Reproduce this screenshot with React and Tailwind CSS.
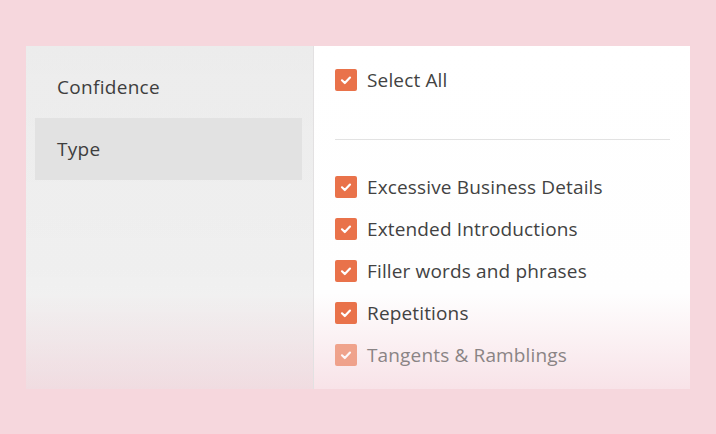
const items = [
  "Excessive Business Details",
  "Extended Introductions",
  "Filler words and phrases",
  "Repetitions",
  "Tangents & Ramblings",
];

function Check({ faded }) {
  return (
    <span
      className={`flex h-[22px] w-[22px] shrink-0 items-center justify-center rounded-[2px] bg-[#e9724a] ${
        faded ? "opacity-60" : ""
      }`}
    >
      <svg width="14" height="14" viewBox="0 0 14 14" fill="none">
        <path
          d="M3 7.3 L5.8 10 L11 4.6"
          stroke="white"
          strokeWidth="2.2"
          strokeLinecap="round"
          strokeLinejoin="round"
        />
      </svg>
    </span>
  );
}

function Row({ label, faded }) {
  return (
    <div className="flex h-[22px] items-center gap-[10px]">
      <Check faded={faded} />
      <span className={`text-[19px] tracking-[0.15px] ${faded ? "text-[#8a8485]" : "text-[#424242]"}`}>
        {label}
      </span>
    </div>
  );
}

export default function App() {
  return (
    <div
      className="flex h-[434px] w-[716px] bg-[#f6d7dd] pl-[26px] pt-[46px]"
      style={{ fontFamily: "'Open Sans', 'Noto Sans', sans-serif" }}
    >
      <div className="flex h-[343px] w-[664px] bg-[linear-gradient(to_bottom,#ffffff_0%,#fefefe_72%,#f8e3e8_100%)]">
        <div className="flex w-[288px] flex-col border-r border-[#e3e1e2] bg-[linear-gradient(to_bottom,rgba(0,0,0,0.075)_0%,rgba(0,0,0,0.06)_65%,rgba(0,0,0,0.03)_100%)] pl-[9px] pr-[11px] pt-[10px] text-[19px] tracking-[0.3px] text-[#3e3e3e]">
          <div className="flex h-[62px] items-center pl-[22px]">Confidence</div>
          <div className="flex h-[62px] items-center bg-[#e2e2e2] pl-[22px]">Type</div>
        </div>
        <div className="flex flex-1 flex-col pl-[21px] pr-[20px] pt-[23px]">
          <Row label="Select All" />
          <div className="mt-[48px] border-t border-[#e2e2e2]" />
          <div className="mt-[36px] flex flex-col gap-[20px]">
            {items.map((label, i) => (
              <Row key={label} label={label} faded={i === items.length - 1} />
            ))}
          </div>
        </div>
      </div>
    </div>
  );
}
